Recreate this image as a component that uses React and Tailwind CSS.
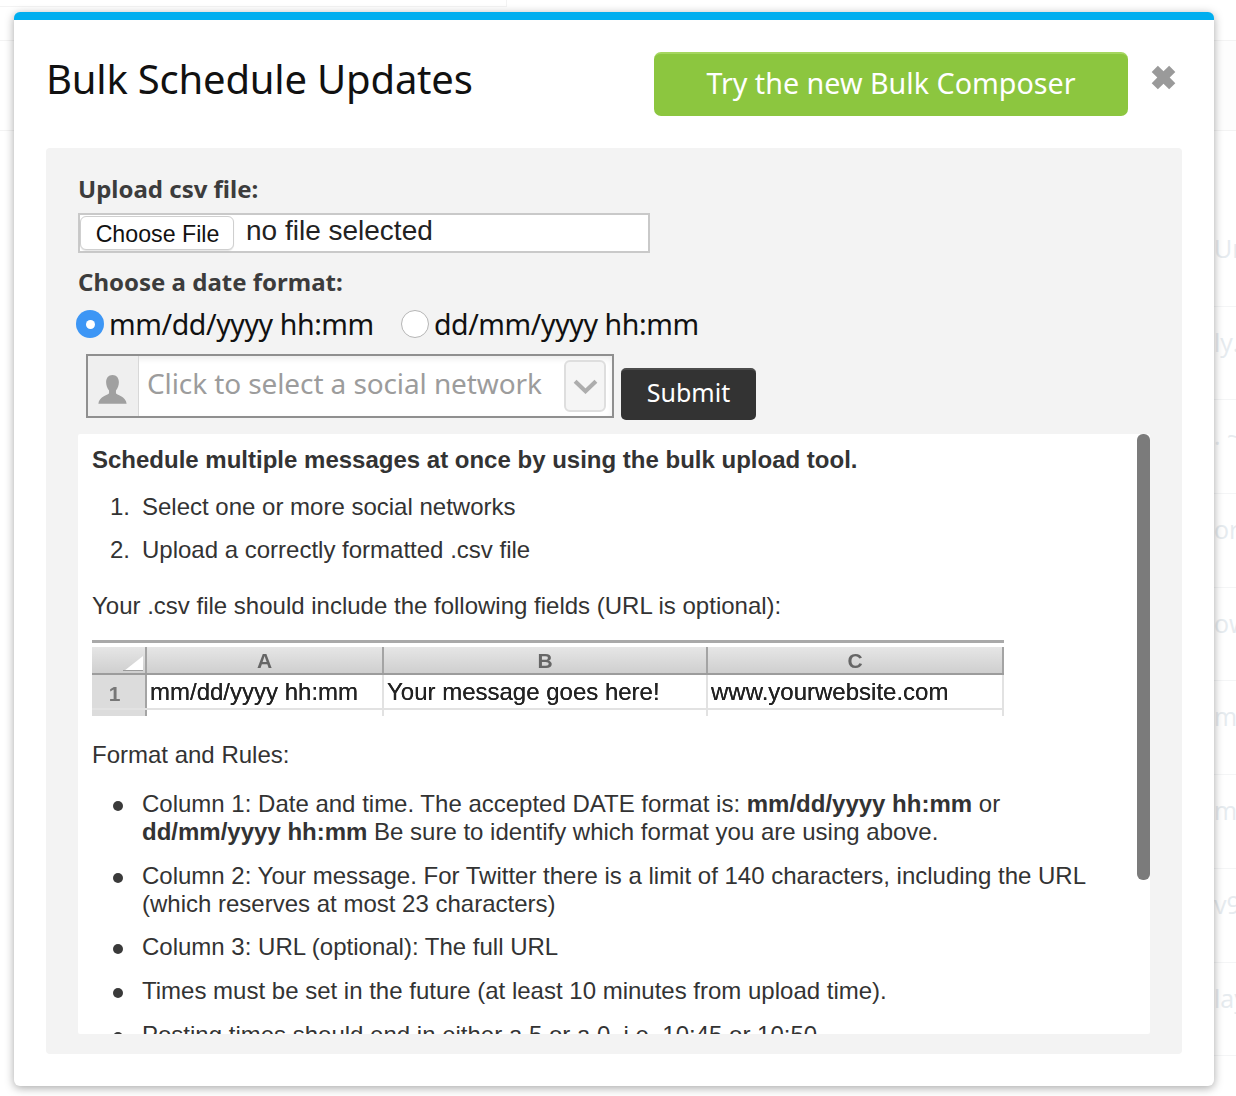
import React from "react";

const sans = "font-['Noto_Sans','Open_Sans',sans-serif]";
const arial = "font-['Liberation_Sans',Arial,sans-serif]";

function Backdrop() {
  const items = ["Ur", "ly.", ". ~", "or", "ow", "m", "m", "v9", "lay"];
  return (
    <div className="absolute inset-0 overflow-hidden bg-white">
      <div className="h-[7px] w-[507px] border-b border-r border-[#f3f3f3]" />
      <div className="mt-[33px] flex h-[91px] justify-between">
        <div className="w-[14px] border-y border-[#f3f3f3]" />
        <div className="w-[22px] border-y border-[#f3f3f3] bg-[#fdfdfd]" />
      </div>
      <div className="ml-[1214px] mt-[82px] w-[22px]">
        {items.map((t, i) => (
          <div key={i} className="h-[93.7px] overflow-hidden whitespace-nowrap border-b border-[#f4f5f6] pt-[20px] text-[25px] leading-[30px] text-[#e6ebef] font-['Open_Sans',sans-serif]">
            {t}
          </div>
        ))}
      </div>
    </div>
  );
}

function Sheet() {
  const head = "flex items-center justify-center border-r-2 border-[#a4a4a4] bg-gradient-to-b from-[#e6e6e6] to-[#cfcfcf] text-[21px] font-bold leading-none text-[#666]";
  const cell = "flex items-center border-r-2 border-[#e2e2e2] pl-[3px] text-[24px] leading-none text-[#222] whitespace-nowrap [text-shadow:0_0_0.6px_#222]";
  return (
    <div className={`mt-[20px] h-[76px] w-[912px] border-t-[3px] border-[#a9a9a9] blur-[0.5px] ${arial}`}>
      <div className="mt-[4px] grid h-[28px] grid-cols-[55px_237px_324px_296px] border-b-[2px] border-[#9c9c9c]">
        <div className="relative border-r-2 border-[#a4a4a4] bg-gradient-to-b from-[#e6e6e6] to-[#cfcfcf]">
          <div className="absolute bottom-[2px] right-[2px] h-0 w-0 border-b-[15px] border-r-[19px] border-b-white border-r-transparent [transform:scaleX(-1)]" />
          <div className="absolute bottom-[2px] right-[2px] h-[1px] w-[20px] bg-[#9a9a9a]" />
        </div>
        <div className={head}>A</div>
        <div className={head}>B</div>
        <div className={head}>C</div>
      </div>
      <div className="grid h-[35px] grid-cols-[55px_237px_324px_296px] border-b-2 border-[#e2e2e2]">
        <div className="flex items-center justify-center border-r-2 border-[#a4a4a4] bg-[#dcdcdc] pr-[8px] pt-[4px] text-[21px] font-bold text-[#777]">1</div>
        <div className={cell}>mm/dd/yyyy hh:mm</div>
        <div className={cell}>Your message goes here!</div>
        <div className={cell}>www.yourwebsite.com</div>
      </div>
      <div className="grid h-[6px] grid-cols-[55px_237px_324px_296px]">
        <div className="border-r-2 border-[#a4a4a4] bg-[#dcdcdc]" />
        <div className="border-r-2 border-[#e2e2e2]" />
        <div className="border-r-2 border-[#e2e2e2]" />
        <div className="border-r-2 border-[#e2e2e2]" />
      </div>
    </div>
  );
}

function Bullet({ children, className = "" }) {
  return (
    <li className={`relative pl-[50px] ${className}`}>
      <span className="absolute left-[21px] top-[11px] h-[10px] w-[10px] rounded-full bg-[#3a3a3a]" />
      {children}
    </li>
  );
}

export default function App() {
  return (
    <div className="relative h-[1096px] w-[1236px] overflow-hidden">
      <Backdrop />
      <div className="absolute left-[14px] top-[12px] flex h-[1074px] w-[1200px] flex-col rounded-[6px] border-t-[8px] border-[#00aeef] bg-white px-[32px] shadow-[0_2px_10px_rgba(0,0,0,0.35)]">
        <div className="flex h-[128px] items-start">
          <h1 className={`mt-[32px] text-[40px] leading-[54px] tracking-[-0.2px] text-[#111] ${sans}`}>Bulk Schedule Updates</h1>
          <button className={`ml-auto mr-[22px] mt-[32px] h-[64px] w-[474px] rounded-[7px] border-t-[2px] border-[#a5d65f] bg-[#8cc63f] pb-[4px] text-[28.700px] text-white ${sans}`}>Try the new Bulk Composer</button>
          <svg viewBox="0 0 24 24" className="mr-[5px] mt-[44px] h-[27px] w-[27px] shrink-0" fill="#9a9a9a">
            <path d="M7 1.500 12 6.500 17 1.500 22.500 7 17.500 12 22.500 17 17 22.500 12 17.500 7 22.500 1.500 17 6.500 12 1.500 7Z" />
          </svg>
        </div>

        <div className="flex h-[906px] flex-col rounded-[4px] bg-[#f3f3f3] px-[32px]">
          <label className={`mt-[24px] block text-[24px] font-bold leading-[33px] text-[#3c3c3c] ${sans}`}>Upload csv file:</label>
          <div className={`mt-[8px] flex h-[40px] w-[572px] items-center border-2 border-[#c9c9c9] bg-white ${arial}`}>
            <div className="flex h-[34px] w-[154px] items-center justify-center rounded-[6px] border border-[#cfcfcf] bg-white pl-[1px] pt-[3px] text-[23.200px] text-[#111] shadow-[0_1px_1px_rgba(0,0,0,0.1)]">Choose File</div>
            <span className="ml-[12px] -mt-[4px] text-[28px] text-[#222]">no file selected</span>
          </div>
          <label className={`mt-[12px] block text-[24px] font-bold leading-[33px] text-[#3c3c3c] ${sans}`}>Choose a date format:</label>
          <div className={`-ml-[2px] mt-[5px] flex h-[42px] items-center text-[28.500px] text-[#111] ${sans}`}>
            <span className="flex h-[28px] w-[28px] shrink-0 items-center justify-center rounded-full bg-[#3d96f5]">
              <span className="h-[9px] w-[9px] rounded-full bg-white" />
            </span>
            <span className="ml-[5px] tracking-[-0.4px]">mm/dd/yyyy hh:mm</span>
            <span className="ml-[27px] h-[28px] w-[28px] shrink-0 rounded-full border border-[#b5b5b5] bg-white" />
            <span className="ml-[5px] tracking-[-0.4px]">dd/mm/yyyy hh:mm</span>
          </div>
          <div className="mt-[9px] flex items-start">
            <div className="ml-[8px] flex h-[64px] w-[528px] border-2 border-[#8f8f8f] bg-white shadow-[inset_0_3px_6px_rgba(0,0,0,0.08)]">
              <div className="flex w-[51px] shrink-0 items-end justify-center border-r border-[#d8d8d8] bg-[#efefef] pb-[11px]">
                <svg viewBox="0 0 32 34" className="h-[31px] w-[33px] -translate-x-[1px]" fill="#a0a0a0">
                  <path d="M16 1c4.600 0 7 3.500 7 8 0 3.500-1.300 7-3.200 9v3c0 1.500 11.200 3.500 11.700 11.500H.5C1 24.500 12.200 22.500 12.200 21v-3C10.300 16 9 12.500 9 9c0-4.500 2.400-8 7-8Z" />
                </svg>
              </div>
              <span className={`ml-[8px] mt-[7px] whitespace-nowrap text-[28px] leading-[40px] tracking-[-0.1px] text-[#9c9c9c] ${sans}`}>Click to select a social network</span>
              <div className="ml-auto mr-[6px] mt-[4px] flex h-[52px] w-[42px] shrink-0 items-center justify-center rounded-[6px] border-2 border-[#dedede] bg-[#f5f5f5]">
                <svg viewBox="0 0 24 14" className="h-[15px] w-[25px]" fill="none" stroke="#adadad" strokeWidth="4">
                  <path d="M2 2 12 11.500 22 2" />
                </svg>
              </div>
            </div>
            <button className={`ml-[7px] mt-[14px] h-[52px] w-[135px] rounded-[5px] border-t-[2px] border-[#4c4c4c] bg-[#333] pb-[4px] text-[25px] text-white ${sans}`}>Submit</button>
          </div>

          <div className={`relative mt-[14px] h-[600px] overflow-hidden rounded-[2px] bg-white pl-[14px] pr-[60px] text-[24px] leading-[28px] text-[#333] ${arial}`}>
            <div className="absolute right-0 top-0 h-[446px] w-[13px] rounded-[6px] bg-[#7b7b7b]" />
            <p className="mt-[12px] font-bold">Schedule multiple messages at once by using the bulk upload tool.</p>
            <ol className="mt-[19px]">
              <li className="relative pl-[50px]"><span className="absolute left-[18px]">1.</span>Select one or more social networks</li>
              <li className="relative mt-[15px] pl-[50px]"><span className="absolute left-[18px]">2.</span>Upload a correctly formatted .csv file</li>
            </ol>
            <p className="mt-[28px]">Your .csv file should include the following fields (URL is optional):</p>
            <Sheet />
            <p className="mt-[25px]">Format and Rules:</p>
            <ul className="mt-[21px]">
              <Bullet>Column 1: Date and time. The accepted DATE format is: <b>mm/dd/yyyy hh:mm</b> or <b>dd/mm/yyyy hh:mm</b> Be sure to identify which format you are using above.</Bullet>
              <Bullet className="mt-[16px]">Column 2: Your message. For Twitter there is a limit of 140 characters, including the URL (which reserves at most 23 characters)</Bullet>
              <Bullet className="mt-[15px]">Column 3: URL (optional): The full URL</Bullet>
              <Bullet className="mt-[16px]">Times must be set in the future (at least 10 minutes from upload time).</Bullet>
              <Bullet className="mt-[16px]">Posting times should end in either a 5 or a 0, i.e. 10:45 or 10:50.</Bullet>
            </ul>
          </div>
        </div>
      </div>
    </div>
  );
}
